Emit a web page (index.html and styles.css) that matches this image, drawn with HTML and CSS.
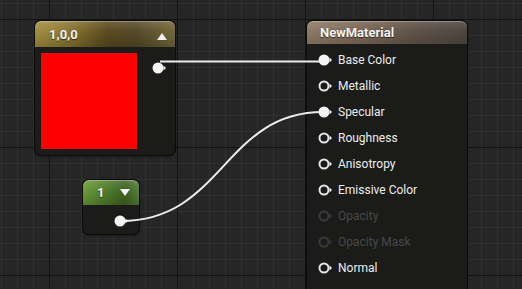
FILE: index.html
```html
<!DOCTYPE html>
<html>
<head>
<meta charset="utf-8">
<link rel="stylesheet" href="styles.css">
</head>
<body>
<div class="canvas">
  <svg class="wires" width="522" height="289" viewBox="0 0 522 289">
    <path d="M160 61.5 L323 61.5" />
    <path d="M121 221 C 223 221, 224 112, 323 112" />
  </svg>

  <div class="node vec">
    <div class="head head-gold">
      <span class="title">1,0,0</span>
      <svg class="tri" width="10" height="7" viewBox="0 0 10 7"><path d="M5 0 L10 7 L0 7 Z"/></svg>
    </div>
    <div class="vec-body">
      <div class="swatch"></div>
      <svg class="pin" width="15" height="12" viewBox="0 0 15 12"><circle cx="6" cy="6" r="5.5" class="fill"/><path d="M11.5 3.5 L14 6 L11.5 8.5 Z"/></svg>
    </div>
  </div>

  <div class="node scalar">
    <div class="head head-green">
      <span class="title">1</span>
      <svg class="tri" width="10" height="7" viewBox="0 0 10 7"><path d="M0 0 L10 0 L5 7 Z"/></svg>
    </div>
    <div class="scalar-body">
      <svg class="pin" width="15" height="12" viewBox="0 0 15 12"><circle cx="6" cy="6" r="5.5" class="fill"/><path d="M11.5 3.5 L14 6 L11.5 8.5 Z"/></svg>
    </div>
  </div>

  <div class="node mat">
    <div class="head head-mat"><span class="title">NewMaterial</span></div>
    <div class="rows">
      <div class="row"><svg class="pin" width="15" height="12" viewBox="0 0 15 12"><circle cx="6" cy="6" r="5.5" class="fill"/><path d="M11.5 3.5 L14 6 L11.5 8.5 Z"/></svg><span>Base Color</span></div>
      <div class="row"><svg class="pin" width="15" height="12" viewBox="0 0 15 12"><circle cx="6" cy="6" r="4.5" class="ring"/><path d="M11.5 3.5 L14 6 L11.5 8.5 Z"/></svg><span>Metallic</span></div>
      <div class="row"><svg class="pin" width="15" height="12" viewBox="0 0 15 12"><circle cx="6" cy="6" r="5.5" class="fill"/><path d="M11.5 3.5 L14 6 L11.5 8.5 Z"/></svg><span>Specular</span></div>
      <div class="row"><svg class="pin" width="15" height="12" viewBox="0 0 15 12"><circle cx="6" cy="6" r="4.5" class="ring"/><path d="M11.5 3.5 L14 6 L11.5 8.5 Z"/></svg><span>Roughness</span></div>
      <div class="row"><svg class="pin" width="15" height="12" viewBox="0 0 15 12"><circle cx="6" cy="6" r="4.5" class="ring"/><path d="M11.5 3.5 L14 6 L11.5 8.5 Z"/></svg><span>Anisotropy</span></div>
      <div class="row"><svg class="pin" width="15" height="12" viewBox="0 0 15 12"><circle cx="6" cy="6" r="4.5" class="ring"/><path d="M11.5 3.5 L14 6 L11.5 8.5 Z"/></svg><span>Emissive Color</span></div>
      <div class="row off"><svg class="pin" width="15" height="12" viewBox="0 0 15 12"><circle cx="6" cy="6" r="4.5" class="ring"/><path d="M11.5 3.5 L14 6 L11.5 8.5 Z"/></svg><span>Opacity</span></div>
      <div class="row off"><svg class="pin" width="15" height="12" viewBox="0 0 15 12"><circle cx="6" cy="6" r="4.5" class="ring"/><path d="M11.5 3.5 L14 6 L11.5 8.5 Z"/></svg><span>Opacity Mask</span></div>
      <div class="row"><svg class="pin" width="15" height="12" viewBox="0 0 15 12"><circle cx="6" cy="6" r="4.5" class="ring"/><path d="M11.5 3.5 L14 6 L11.5 8.5 Z"/></svg><span>Normal</span></div>
    </div>
  </div>
</div>
</body>
</html>
```

FILE: styles.css
```css
html, body {
  margin: 0;
  padding: 0;
}
body {
  width: 522px;
  height: 289px;
  overflow: hidden;
  font-family: Roboto, "Liberation Sans", sans-serif;
}
.canvas {
  position: relative;
  width: 522px;
  height: 289px;
  overflow: hidden;
  background-color: #262626;
  background-image:
    linear-gradient(to right, #131313 1px, transparent 1px),
    linear-gradient(to bottom, #131313 1px, transparent 1px),
    linear-gradient(to right, #313131 1px, transparent 1px),
    linear-gradient(to bottom, #313131 1px, transparent 1px);
  background-size: 128px 128px, 128px 128px, 16px 16px, 16px 16px;
  background-position: 49px 19px, 49px 19px, 1px 3px, 1px 3px;
}
.wires {
  position: absolute;
  left: 0;
  top: 0;
  z-index: 1;
  pointer-events: none;
}
.wires path {
  fill: none;
  stroke: #ececec;
  stroke-width: 2;
}
.node {
  position: absolute;
  border-radius: 6px;
  background: #1b1c1a;
  box-shadow: 0 0 0 1px #0b0b0b, 0 1px 3px rgba(0,0,0,0.6);
}
.node .pin, .node .tri {
  position: relative;
  z-index: 3;
}
.head {
  display: flex;
  align-items: center;
  justify-content: space-between;
  box-sizing: border-box;
  border-radius: 6px 6px 0 0;
  box-shadow: inset 0 1px 0 rgba(255,255,255,0.28);
}
.title {
  color: #f2f2f2;
  font-size: 13px;
  font-weight: 700;
  text-shadow: 0 1px 1px rgba(0,0,0,0.6);
}
.tri path { fill: #f2f2f2; }
.pin path { fill: #f2f2f2; }
.pin .fill { fill: #f4f4f4; }
.pin .ring { fill: none; stroke: #e6e6e6; stroke-width: 2; }

/* vector node */
.vec {
  left: 35px;
  top: 21px;
  width: 140px;
  height: 134px;
}
.head-gold {
  height: 26px;
  padding: 1px 8px 0 14px;
  background:
    linear-gradient(to bottom, rgba(255,255,255,0.14), rgba(0,0,0,0) 40%, rgba(0,0,0,0.18)),
    linear-gradient(to right, #a48e40 0%, #8c7834 22%, #5a4b1f 52%, #55492a 72%, #746839 100%);
}
.head-gold .tri { margin-top: 3px; }
.vec-body {
  display: flex;
  align-items: flex-start;
  padding: 6px 0 0 6px;
}
.swatch {
  width: 96px;
  height: 96px;
  background: #ff0000;
}
.vec-body .pin {
  margin: 9px 0 0 15px;
}

/* scalar node */
.scalar {
  left: 83px;
  top: 180px;
  width: 56px;
  height: 54px;
}
.head-green {
  height: 25px;
  padding: 0 9px 0 14px;
  background:
    linear-gradient(to bottom, rgba(255,255,255,0.14), rgba(0,0,0,0) 40%, rgba(0,0,0,0.18)),
    linear-gradient(to right, #6c9c3a 0%, #4f7a2a 45%, #3f6222 75%, #56803a 100%);
}
.head-green .tri { margin-top: -1px; }
.scalar-body {
  display: flex;
  justify-content: flex-end;
  padding: 10px 10px 0 0;
}

/* material node */
.mat {
  left: 307px;
  top: 21px;
  width: 160px;
  height: 290px;
}
.head-mat {
  height: 23px;
  padding: 0 0 0 13px;
  background:
    linear-gradient(to bottom, rgba(255,255,255,0.12), rgba(0,0,0,0) 40%, rgba(0,0,0,0.14)),
    linear-gradient(to right, #907b67 0%, #7a6756 35%, #5e5248 70%, #4e4741 100%);
}
.rows {
  display: flex;
  flex-direction: column;
  padding: 3px 0 0 11px;
}
.row {
  display: flex;
  align-items: center;
  height: 26px;
  gap: 5px;
  color: #ececec;
  font-size: 12px;
}
.row.off { color: #474747; }
.row.off .pin path { fill: #3a3a3a; }
.row.off .pin .ring { stroke: #3a3a3a; }
```
